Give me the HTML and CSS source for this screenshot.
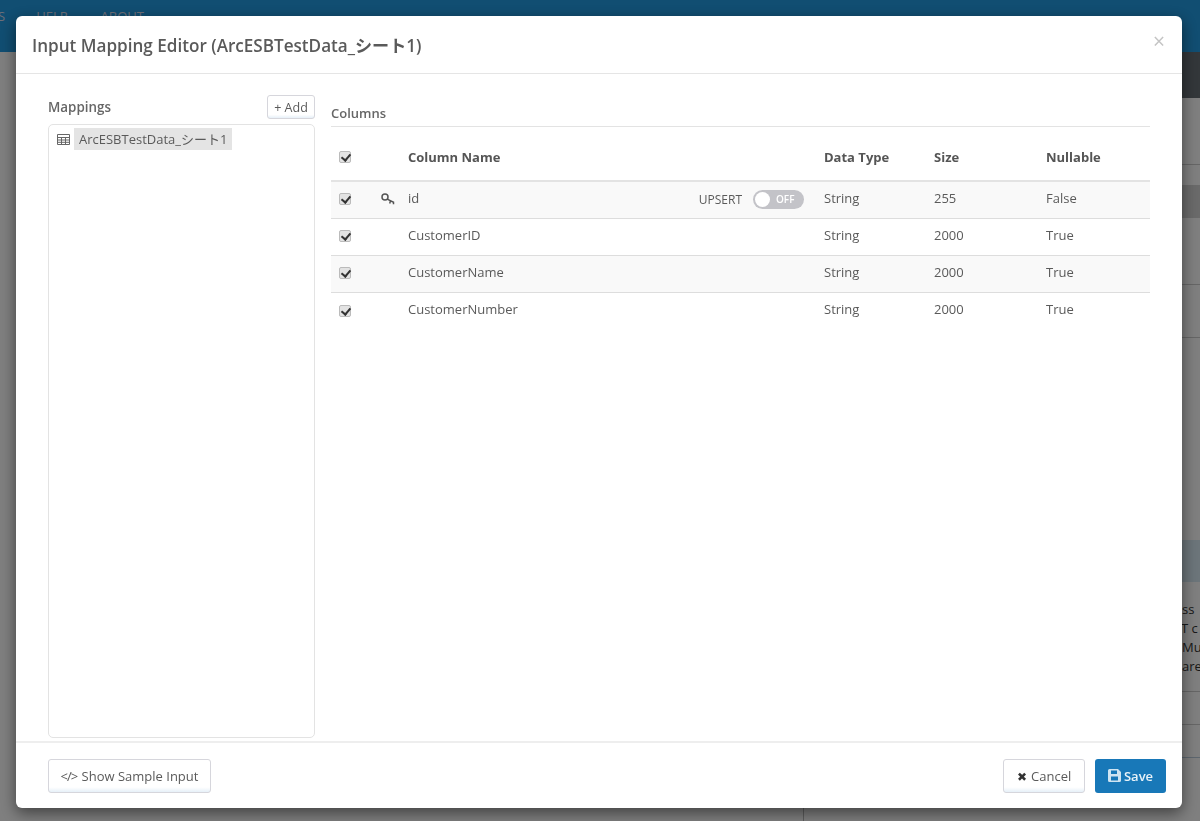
FILE: index.html
```html
<!DOCTYPE html>
<html lang="en">
<head>
<meta charset="utf-8">
<title>Input Mapping Editor</title>
<link rel="stylesheet" href="styles.css">
</head>
<body>
<div class="page">
  <header class="topbar">
    <span class="nav-cut">S</span><span class="nav-item">HELP</span><span class="nav-item">ABOUT</span>
  </header>
  <div class="panel">
    <div class="subbar"></div>
    <div class="bg-row h1"></div>
    <div class="gap20"></div>
    <div class="band"></div>
    <div class="bg-row h2"></div>
    <div class="bg-row h3"></div>
    <div class="gap202"></div>
    <div class="band2"></div>
    <div class="bg-text bg-row"><div>ss</div><div class="pull">RT c</div><div>Mu</div><div>are</div></div>
    <div class="bg-row h4"></div>
    <div class="bg-row h5"></div>
  </div>
</div>
<div class="backdrop"></div>
<section class="modal">
  <div class="modal-header">
    <h4 class="modal-title">Input Mapping Editor (ArcESBTestData_シート1)</h4>
    <span class="close">×</span>
  </div>
  <div class="modal-body">
    <div class="left">
      <div class="left-head">
        <span class="label">Mappings</span>
        <button class="btn btn-add">+ Add</button>
      </div>
      <div class="tree">
        <div class="tree-row">
          <svg class="grid-icon" width="13" height="11" viewBox="0 0 13 11"><path d="M.5.5h12v10H.5zM.5 3.500h12M.5 6h12M.5 8.300h12M4.500 3.500v7M8.500 3.500v7" fill="none" stroke="#666" stroke-width="1"/></svg>
          <span class="tree-name">ArcESBTestData_シート1</span>
        </div>
      </div>
    </div>
    <div class="right">
      <div class="columns-title">Columns</div>
      <div class="row head">
        <span class="c-check"><span class="cb"></span></span><span class="c-key"></span>
        <span class="c-name">Column Name</span><span class="c-type">Data Type</span><span class="c-size">Size</span><span class="c-null">Nullable</span>
      </div>
      <div class="row alt">
        <span class="c-check"><span class="cb"></span></span>
        <span class="c-key"><svg width="14" height="12" viewBox="0 0 14 12"><circle cx="4" cy="4" r="3" fill="none" stroke="#555" stroke-width="1.5"/><path d="M6.200 6.200l6.800 3.300M9.500 7.800l-.8 2.700M12.500 9.300v2" fill="none" stroke="#555" stroke-width="1.500"/></svg></span>
        <span class="c-name split"><span>id</span><span class="upsert">UPSERT<span class="toggle"><span class="knob"></span><span class="off">OFF</span></span></span></span>
        <span class="c-type">String</span><span class="c-size">255</span><span class="c-null">False</span>
      </div>
      <div class="row">
        <span class="c-check"><span class="cb"></span></span><span class="c-key"></span>
        <span class="c-name">CustomerID</span><span class="c-type">String</span><span class="c-size">2000</span><span class="c-null">True</span>
      </div>
      <div class="row alt">
        <span class="c-check"><span class="cb"></span></span><span class="c-key"></span>
        <span class="c-name">CustomerName</span><span class="c-type">String</span><span class="c-size">2000</span><span class="c-null">True</span>
      </div>
      <div class="row last">
        <span class="c-check"><span class="cb"></span></span><span class="c-key"></span>
        <span class="c-name">CustomerNumber</span><span class="c-type">String</span><span class="c-size">2000</span><span class="c-null">True</span>
      </div>
    </div>
  </div>
  <div class="modal-footer">
    <button class="btn btn-foot btn-sample"><span class="code">&lt;/&gt;</span> Show Sample Input</button>
    <div class="foot-right">
      <button class="btn btn-foot btn-cancel"><span class="x">✖</span> Cancel</button>
      <button class="btn-save"><svg width="13" height="13" viewBox="0 0 13 13"><path fill="#cfe4f2" fill-rule="evenodd" d="M1.500 0H10l3 3v8.500a1.500 1.500 0 0 1-1.500 1.500h-10A1.500 1.500 0 0 1 0 11.500v-10A1.500 1.500 0 0 1 1.500 0zM3 1.500V5h6V1.500zM3 7.500V11.500h7V7.500z"/></svg> Save</button>
    </div>
  </div>
</section>
</body>
</html>
```
FILE: styles.css
```css
* { box-sizing: border-box; }
html, body { margin: 0; height: 100%; overflow: hidden; }
body { font-family: "Open Sans", "Noto Sans CJK JP", sans-serif; font-size: 13px; color: #5a5a5a; background: #fff; }

.page { height: 821px; display: flex; flex-direction: column; }
.topbar { height: 52px; background: #229ce4; color: #dde; flex: none; font-size: 13px; line-height: 33px; white-space: nowrap; overflow: hidden; }
.nav-cut { margin-left: -2px; }
.nav-item { margin-left: 31px; }
.nav-item + .nav-item { margin-left: 33px; }

.panel { flex: 1; margin-left: 803px; border-left: 1px solid #bbb; display: flex; flex-direction: column; overflow: hidden; }
.subbar { height: 46px; flex: none; background: #666e74; }
.bg-row { flex: none; border-bottom: 1px solid #ccc; }
.h1 { height: 67px; }
.gap20 { height: 20px; flex: none; }
.band { height: 33px; flex: none; background: #d4d4d4; }
.h2 { height: 67px; }
.h3 { height: 53px; }
.gap202 { height: 202px; flex: none; }
.band2 { height: 42px; flex: none; background: #d8eaf4; }
.bg-text { height: 110px; padding: 18px 0 0 378px; line-height: 19px; font-size: 13px; color: #333; white-space: nowrap; }
.pull { margin-left: -9px; }
.h4 { height: 33px; }
.h5 { height: 33px; border-bottom-color: #bcd; }
.backdrop { position: fixed; inset: 0; background: rgba(0,0,0,.5); }

.modal { position: fixed; left: 16px; top: 16px; width: 1166px; height: 792px; background: #fff; border-radius: 6px; box-shadow: 0 5px 15px rgba(0,0,0,.5); display: flex; flex-direction: column; }
.modal-header { height: 58px; flex: none; border-bottom: 1px solid #e5e5e5; padding: 0 16px; display: flex; align-items: center; justify-content: space-between; }
.modal-title { margin: 0; font-size: 17.1px; font-weight: 600; color: #5a5a5a; }
.close { font-size: 21px; color: #c4c4c4; margin-right: 1px; margin-top: -7px; }
.modal-body { flex: 1; display: flex; padding: 21px 32px 3px; min-height: 0; }

.left { width: 267px; flex: none; display: flex; flex-direction: column; }
.left-head { display: flex; justify-content: space-between; align-items: center; height: 24px; margin-bottom: 5px; }
.label { font-weight: 600; color: #666; font-size: 13.4px; }
.btn { font: inherit; color: #5a5a5a; background: linear-gradient(#fff 85%, #e6f0f8); border: 1px solid #d6d6dc; border-radius: 3px; }
.btn-add { width: 48px; height: 24px; padding: 0; font-size: 12.5px; }
.tree { flex: 1; border: 1px solid #e3e3e3; border-radius: 5px; padding: 3px 8px; }
.tree-row { display: flex; align-items: center; gap: 4px; }
.grid-icon { flex: none; }
.tree-name { background: #e4e4e4; padding: 0 5px; height: 22px; line-height: 22px; font-size: 13px; }

.right { flex: 1; margin-left: 16px; min-width: 0; }
.columns-title { height: 26px; margin-top: 6px; line-height: 24px; font-weight: 600; color: #666; border-bottom: 1px solid #e3e3e3; }
.row { height: 37px; display: flex; align-items: center; border-bottom: 1px solid #ddd; padding-bottom: 2px; }
.row.head { height: 55px; font-weight: 700; color: #555; border-bottom: 2px solid #e3e3e3; padding: 6px 0 0; }
.row.alt { background: #f9f9f9; }
.row.last { border-bottom: 0; }
.c-check { width: 32px; padding-left: 8px; display: flex; flex: none; }
.c-key { width: 45px; padding-left: 18px; display: flex; flex: none; }
.c-name { width: 416px; flex: none; margin-top: -3px; }
.c-name.split { display: flex; justify-content: space-between; align-items: center; padding-right: 20px; margin-top: 0; }
.c-name.split > span:first-child { margin-top: -3px; }
.c-type { width: 110px; flex: none; margin-top: -3px; }
.c-size { width: 112px; flex: none; margin-top: -3px; }
.c-null { flex: 1; margin-top: -3px; }
.head .c-name, .head .c-type, .head .c-size, .head .c-null { margin-top: 1px; }
.cb { width: 12px; height: 12px; border: 1px solid #bbb; border-radius: 2px; background: #e3e3e3; display: block; position: relative; }
.cb::after { content: ""; position: absolute; left: 3px; top: 0; width: 4px; height: 7px; border: solid #333; border-width: 0 2px 2px 0; transform: rotate(40deg); }
.upsert { display: flex; align-items: center; gap: 11px; font-size: 12px; }
.toggle { width: 51px; height: 19px; border-radius: 10px; background: #c3c3c8; display: flex; align-items: center; padding: 2px; gap: 6px; }
.knob { width: 15px; height: 15px; border-radius: 50%; background: #fff; flex: none; }
.off { color: #fff; font-size: 10px; font-weight: 600; }

.modal-footer { height: 67px; flex: none; border-top: 2px solid #eee; padding: 0 16px 0 32px; display: flex; align-items: center; justify-content: space-between; }
.foot-right { display: flex; gap: 10px; }
.btn-foot { height: 34px; padding: 0; font-size: 13px; }
.btn-sample { width: 163px; }
.code { letter-spacing: -1px; margin-right: 1px; }
.btn-cancel { width: 82px; }
.x { color: #333; font-size: 12px; margin-right: 1px; }
.btn-save { width: 71px; height: 34px; border: 0; border-radius: 3px; background: #1878b8; color: #e8f2f8; font: inherit; font-weight: 600; display: flex; align-items: center; justify-content: center; gap: 3px; }
```
